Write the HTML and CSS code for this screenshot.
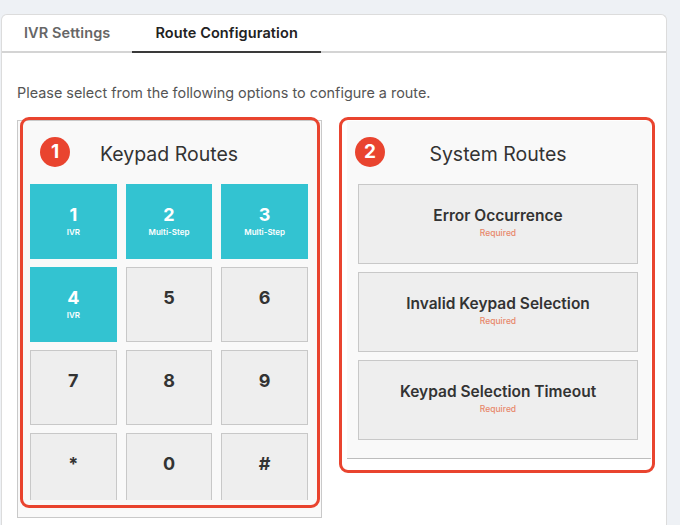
FILE: index.html
```html
<!DOCTYPE html>
<html lang="en">
<head>
  <meta charset="UTF-8">
  <meta name="viewport" content="width=device-width, initial-scale=1.0">
  <link rel="stylesheet" href="styles.css">
</head>
<body>

<div class="card">
  <div class="tabs">
    <div class="tab">IVR Settings</div>
    <div class="tab active">Route Configuration</div>
  </div>

  <div class="content">
    <p class="intro">Please select from the following options to configure a route.</p>

    <div class="panels">
      <!-- Keypad routes -->
      <div class="panel keypad-panel">
        <div class="mark mark-left"><span class="badge">1</span></div>
        <div class="panel-title">Keypad Routes</div>
        <div class="keypad">
          <div class="key set"><span class="num">1</span><span class="lbl">IVR</span></div>
          <div class="key set"><span class="num">2</span><span class="lbl">Multi-Step</span></div>
          <div class="key set"><span class="num">3</span><span class="lbl">Multi-Step</span></div>
          <div class="key set"><span class="num">4</span><span class="lbl">IVR</span></div>
          <div class="key"><span class="num">5</span><span class="lbl"></span></div>
          <div class="key"><span class="num">6</span><span class="lbl"></span></div>
          <div class="key"><span class="num">7</span><span class="lbl"></span></div>
          <div class="key"><span class="num">8</span><span class="lbl"></span></div>
          <div class="key"><span class="num">9</span><span class="lbl"></span></div>
          <div class="key"><span class="num">*</span><span class="lbl"></span></div>
          <div class="key"><span class="num">0</span><span class="lbl"></span></div>
          <div class="key"><span class="num">#</span><span class="lbl"></span></div>
        </div>
      </div>

      <!-- System routes -->
      <div class="panel system-panel">
        <div class="mark mark-right"><span class="badge">2</span></div>
        <div class="panel-title">System Routes</div>
        <div class="routes">
          <div class="route"><span class="route-name">Error Occurrence</span><span class="req">Required</span></div>
          <div class="route"><span class="route-name">Invalid Keypad Selection</span><span class="req">Required</span></div>
          <div class="route"><span class="route-name">Keypad Selection Timeout</span><span class="req">Required</span></div>
        </div>
      </div>
    </div>
  </div>
</div>

</body>
</html>
```

FILE: styles.css
```css
body {
  margin: 0;
  background: #eef1f5;
  font-family: Inter, "Noto Sans", sans-serif;
  color: #333;
  overflow: hidden;
}

.card {
  margin: 14px 0 0 1px;
  width: 664px;
  height: 560px;
  background: #fff;
  border: 1px solid #dcdcdc;
  border-bottom: none;
  border-radius: 6px 6px 0 0;
}

.tabs {
  display: flex;
  height: 36px;
  border-bottom: 2px solid #d4d4d4;
}

.tab {
  padding: 0 22px;
  line-height: 36px;
  font-size: 14.5px;
  letter-spacing: 0.1px;
  font-weight: 600;
  color: #666;
  margin-bottom: -2px;
  border-bottom: 2px solid transparent;
}

.tab.active {
  color: #222;
  border-bottom-color: #3a3a3a;
  padding: 0 23px;
}

.content {
  padding: 0 15px;
}

.intro {
  margin: 31px 0 18px;
  font-size: 14.4px;
  line-height: 18px;
  color: #555;
}

.panels {
  display: flex;
  gap: 25px;
  align-items: flex-start;
}

.panel {
  position: relative;
  background: #f9f9f9;
  box-sizing: border-box;
}

.keypad-panel {
  width: 305px;
  border: 1px solid #c9c9c9;
  padding: 0 13px 17px 12px;
}

.system-panel {
  width: 304px;
  margin-top: 1px;
  border-bottom: 1px solid #bdbdbd;
  padding: 0 13px 18px 11px;
}

.panel-title {
  text-align: center;
  font-size: 19.5px;
  line-height: 24px;
  padding: 21px 0 18px;
  color: #333;
}

.keypad {
  display: grid;
  grid-template-columns: repeat(3, 1fr);
  grid-auto-rows: 75px;
  gap: 8px 9px;
  height: 316px;
  overflow: hidden;
}

.key {
  display: flex;
  flex-direction: column;
  align-items: center;
  justify-content: center;
  background: #eeeeee;
  border: 1px solid #c8c8c8;
  color: #333;
}

.key.set {
  background: #33c3d1;
  border-color: #33c3d1;
  color: #fff;
}

.num {
  font-size: 18px;
  line-height: 20px;
  font-weight: 700;
}

.lbl {
  font-size: 8px;
  line-height: 11px;
  height: 11px;
  margin-top: 2px;
  font-weight: 600;
}

.routes {
  display: flex;
  flex-direction: column;
  gap: 8px;
}

.route {
  height: 80px;
  box-sizing: border-box;
  display: flex;
  flex-direction: column;
  align-items: center;
  justify-content: center;
  background: #eeeeee;
  border: 1px solid #c8c8c8;
  padding-bottom: 4px;
}

.route-name {
  font-size: 15.5px;
  line-height: 20px;
  font-weight: 600;
  color: #333;
}

.req {
  font-size: 8.5px;
  line-height: 11px;
  margin-top: 2px;
  color: #e8876a;
  font-weight: 500;
}

/* red annotation overlays */
.mark {
  position: absolute;
  border: 3px solid #e9442f;
  border-radius: 9px;
  pointer-events: none;
}

.mark-left {
  left: 2px;
  top: -4px;
  width: 294px;
  height: 385px;
}

.mark-right {
  left: -8px;
  top: -4px;
  width: 310px;
  height: 350px;
}

.badge {
  position: absolute;
  width: 30px;
  height: 30px;
  border-radius: 50%;
  background: #e9442f;
  color: #fff;
  font-size: 19px;
  font-weight: 700;
  line-height: 30px;
  text-align: center;
  top: 17px;
}

.mark-left .badge {
  left: 17px;
}

.mark-right .badge {
  left: 13px;
}
```
